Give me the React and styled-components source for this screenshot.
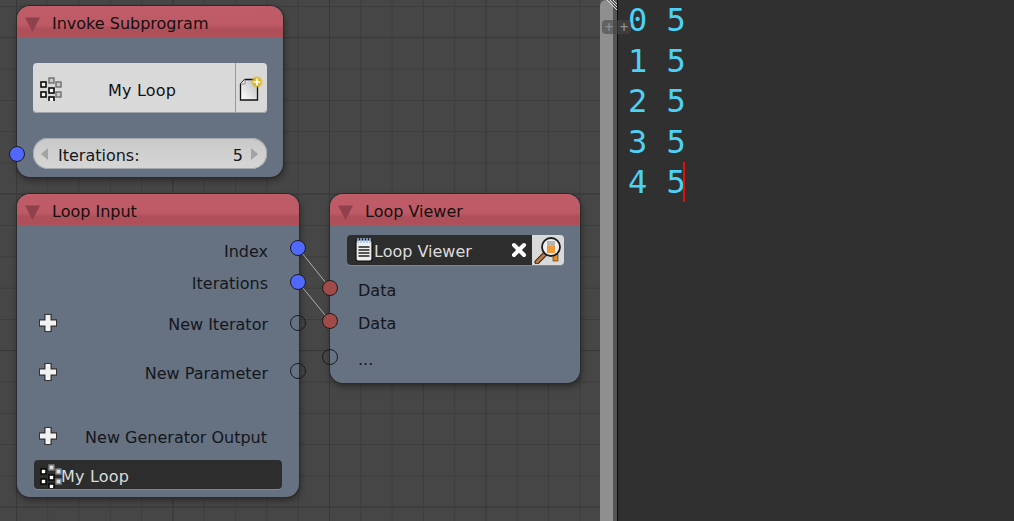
import styled, { createGlobalStyle } from 'styled-components';

const GlobalStyle = createGlobalStyle`
  html, body {
    margin: 0;
    padding: 0;
    background: #303030;
  }
  #root {
    width: 1014px;
    height: 521px;
    overflow: hidden;
  }
`;

const Screen = styled.div`
  display: flex;
  width: 1014px;
  height: 521px;
  font-family: 'DejaVu Sans', sans-serif;
`;

const NodeEditor = styled.div`
  position: relative;
  width: 600px;
  height: 521px;
  overflow: hidden;
  background-color: #464646;
  background-image:
    linear-gradient(90deg, #393939 1px, transparent 1px),
    linear-gradient(#393939 1px, transparent 1px),
    linear-gradient(90deg, #3d3d3d 1px, transparent 1px),
    linear-gradient(#3d3d3d 1px, transparent 1px);
  background-size: 156.5px 156.5px, 156.5px 156.5px, 31.3px 31.3px, 31.3px 31.3px;
  background-position: 16px 37px, 16px 37px, 16px 6px, 16px 6px;
`;

const Wires = styled.svg`
  position: absolute;
  inset: 0;
`;

const Node = styled.div`
  position: absolute;
  left: ${(p) => p.$x}px;
  top: ${(p) => p.$y}px;
  width: ${(p) => p.$w}px;
  height: ${(p) => p.$h}px;
  display: flex;
  flex-direction: column;
  background: #667181;
  border-radius: 13px;
  box-shadow: 0 0 0 1px #2b2b2b, 1px 3px 7px rgba(0, 0, 0, 0.45);
`;

const Header = styled.div`
  display: flex;
  align-items: center;
  flex: 0 0 31px;
  box-sizing: border-box;
  gap: 12px;
  padding: 4px 0 0 8px;
  background: linear-gradient(#c05c67 0, #bd5a65 60%, #ae4f5a 75%, #ae4f5a 100%);
  border-radius: 13px 13px 0 0;
  color: #14100f;
  font-size: 16px;
`;

const Collapse = styled.svg`
  flex: none;
  width: 15px;
  height: 15px;
  margin-top: 1px;
`;

const Body = styled.div`
  display: flex;
  flex-direction: column;
  flex: 1;
  padding-top: ${(p) => p.$top || 0}px;
`;

const FieldRow = styled.div`
  position: relative;
  display: flex;
  align-items: center;
  box-sizing: border-box;
  height: ${(p) => p.$h || 32}px;
  margin-top: ${(p) => p.$mt || 0}px;
  padding: 0 ${(p) => p.$pr ?? 0}px 0 ${(p) => p.$pl ?? 0}px;
`;

const Row = styled(FieldRow)`
  justify-content: ${(p) => (p.$left ? 'flex-start' : 'space-between')};
  color: #14171c;
  font-size: 16px;
`;

const Spacer = styled.span`
  flex: 1;
`;

const Socket = styled.span`
  position: absolute;
  ${(p) => (p.$side === 'left' ? 'left: -8px;' : 'right: -7px;')}
  top: calc(50% - 8px + ${(p) => p.$dy || 0}px);
  width: 16px;
  height: 16px;
  box-sizing: border-box;
  border-radius: 50%;
  border: 1px solid #1c1c1c;
  background: ${(p) => p.$color || 'transparent'};
`;

const PickerButton = styled.div`
  display: flex;
  align-items: stretch;
  height: 50px;
  margin: 0 16px;
  background: #d9d9d9;
  border-radius: 4px;
  box-shadow: inset 0 -1px 0 #a0a3a8;
  font-size: 16px;
  letter-spacing: 0.2px;
  color: #111;
`;

const PickerMain = styled.div`
  position: relative;
  display: flex;
  align-items: center;
  justify-content: center;
  flex: 1;
  padding: 4px 0 0 16px;
`;

const PickerIcon = styled.svg`
  position: absolute;
  left: 7px;
  top: 12px;
  width: 24px;
  height: 26px;
`;

const PickerAdd = styled.div`
  display: flex;
  align-items: center;
  justify-content: center;
  width: 31px;
  border-left: 1px solid #9a9a9a;
`;

const NumberField = styled.div`
  display: flex;
  flex: 1;
  align-items: center;
  height: 31px;
  padding: 0 9px 0 8px;
  background: linear-gradient(#c9c9c9, #d6d6d6);
  border-radius: 15px;
  box-shadow: inset 0 0 0 1px #a6a9ad;
  color: #15171a;
  font-size: 16px;
`;

const Label = styled.span`
  flex: 1;
  margin-left: 9px;
  padding-top: 4px;
`;

const Value = styled.span`
  margin-right: 7px;
  padding-top: 4px;
`;

const DarkField = styled.div`
  display: flex;
  align-items: center;
  flex: 1;
  height: ${(p) => p.$h}px;
  min-width: 0;
  padding-left: ${(p) => p.$pl}px;
  background: #2d2d2d;
  border-radius: ${(p) => (p.$joined ? '4px 0 0 4px' : '4px')};
  box-shadow: 0 1px 0 #7d8591;
  color: #dcdcdc;
  font-size: 16px;
`;

const FieldText = styled.span`
  padding-top: 3px;
  margin-left: ${(p) => p.$ml || 0}px;
  letter-spacing: ${(p) => p.$ls || 0}px;
`;

const FieldIcon = styled.svg`
  flex: none;
`;

const ClearIcon = styled.svg`
  flex: none;
  margin-right: 5px;
`;

const SearchButton = styled.div`
  display: flex;
  align-items: center;
  justify-content: center;
  flex: none;
  width: 32px;
  height: 30px;
  background: #d9d9d9;
  border-radius: 0 4px 4px 0;
  box-shadow: 0 1px 0 #7d8591;
`;

const PlusMark = styled.svg`
  flex: none;
  margin-bottom: 3px;
`;

const NotepadMark = styled.svg`
  flex: none;
  margin-left: 7px;
`;

const Divider = styled.div`
  position: relative;
  display: flex;
  flex: none;
  width: 18px;
  background: #555;
  border-right: 1px solid #0c0c0c;
  box-sizing: border-box;
`;

const ScrollThumb = styled.div`
  width: 13px;
  height: 100%;
  background: #8f8f8f;
  border-radius: 6px 6px 0 0;
`;

const CornerHatch = styled.svg`
  position: absolute;
  top: 0;
  right: 0;
`;

const SplitHandle = styled.div`
  position: absolute;
  left: 2px;
  top: 20px;
  display: flex;
  justify-content: space-between;
  box-sizing: border-box;
  width: 29px;
  height: 14px;
  padding: 0 2px;
  background: rgba(70, 70, 70, 0.6);
  border-radius: 4px;
  color: #8c8c8c;
  font-size: 12px;
  font-weight: bold;
  line-height: 14px;
`;

const TextEditor = styled.div`
  flex: 1;
  padding: 0 0 0 10px;
  background: #303030;
  color: #4cd2f7;
  font-family: 'DejaVu Sans Mono', monospace;
  font-size: 32px;
  line-height: 40.5px;
`;

const Line = styled.div`
  white-space: pre;
`;

const Caret = styled.span`
  display: inline-block;
  width: 2px;
  height: 40px;
  margin-left: -3px;
  background: #e01010;
  vertical-align: top;
`;

const TriangleDown = () => (
  <Collapse viewBox="0 0 15 15">
    <path d="M0 0.5H15L7.5 15Z" fill="#8f414b" />
  </Collapse>
);

const GridIcon = ({ light }) => {
  const main = light ? '#f2f2f2' : '#fff';
  const edge = '#0a0a0a';
  const soft = light ? '#c8c8c8' : '#dcdcdc';
  const softEdge = light ? '#6e6e6e' : '#7f7f7f';
  return (
    <>
      {[[1, 7], [9, 13], [1, 17], [9, 22]].map(([x, y]) => (
        <rect key={`${x}${y}`} x={x} y={y} width="5" height="5" fill={main} stroke={edge} strokeWidth="1.6" />
      ))}
      {[[9, 3], [16, 7], [16, 17]].map(([x, y]) => (
        <rect key={`${x}${y}`} x={x} y={y} width="5" height="5" fill={soft} stroke={softEdge} strokeWidth="1.4" />
      ))}
    </>
  );
};

const NewFileIcon = () => (
  <svg width="26" height="26" viewBox="0 0 26 26">
    <defs>
      <linearGradient id="page" x1="0" y1="1" x2="1" y2="0">
        <stop offset="0" stopColor="#fff" />
        <stop offset="1" stopColor="#bdbdbd" />
      </linearGradient>
      <radialGradient id="glow">
        <stop offset="0.55" stopColor="#dcb81e" />
        <stop offset="1" stopColor="#dcb81e" stopOpacity="0" />
      </radialGradient>
    </defs>
    <path d="M6 4.5H18.5V25H1.5V9Z" fill="url(#page)" stroke="#111" strokeWidth="1.3" />
    <path d="M6 4.5V9H1.5" fill="#f2f2f2" stroke="#777" strokeWidth="0.8" />
    <circle cx="18" cy="7" r="6.5" fill="url(#glow)" />
    <path d="M18 3.5V10.5M14.5 7H21.5" stroke="#fff" strokeWidth="1.6" />
  </svg>
);

const PlusIcon = () => (
  <PlusMark width="20" height="20" viewBox="0 0 20 20">
    <path d="M10 1V19M1 10H19" stroke="#333" strokeWidth="7.5" />
    <path d="M10 2V18M2 10H18" stroke="#f2f2f2" strokeWidth="5" />
  </PlusMark>
);

const Arrow = ({ dir }) => (
  <svg width="8" height="12" viewBox="0 0 8 12">
    <path d={dir === 'left' ? 'M7 0V12L0 6Z' : 'M1 0V12L8 6Z'} fill="#a3a3a3" />
  </svg>
);

const NotepadIcon = () => (
  <NotepadMark width="20" height="26" viewBox="0 0 20 26">
    <rect x="2" y="3" width="16" height="21" rx="2" fill="#ededed" stroke="#111" strokeWidth="1.2" />
    <path d="M4 1V6M7 1V6M10 1V6M13 1V6M16 1V6" stroke="#9dc0e8" strokeWidth="1.4" />
    <path d="M4.5 10H15.5M4.5 13H15.5M4.5 16H15.5M4.5 19H15.5" stroke="#222" strokeWidth="1.6" />
  </NotepadMark>
);

const MagnifierIcon = () => (
  <svg width="28" height="28" viewBox="0 0 28 28">
    <rect x="19" y="18" width="5" height="7" fill="#ea8a1a" stroke="#333" strokeWidth="0.6" />
    <path d="M3 26L11 18" stroke="#3a2414" strokeWidth="5" strokeLinecap="round" />
    <path d="M3 26L11 18" stroke="#b8784a" strokeWidth="3" strokeLinecap="round" />
    <circle cx="17" cy="11" r="9" fill="#f0f0f0" stroke="#1c1c1c" strokeWidth="1.8" />
    <rect x="13" y="10" width="8" height="7" fill="#ef9a3a" />
    <rect x="13" y="5" width="8" height="5" fill="#b5b5b5" />
  </svg>
);

const App = () => (
  <Screen>
    <GlobalStyle />
    <NodeEditor>
      <Wires width="600" height="521">
        <path d="M298 248L330 288M298 282L330 321" stroke="#aeaeae" strokeWidth="1" />
      </Wires>

      <Node $x={17} $y={6} $w={266} $h={171}>
        <Header>
          <TriangleDown />
          Invoke Subprogram
        </Header>
        <Body $top={26}>
          <PickerButton>
            <PickerMain>
              <PickerIcon viewBox="0 0 24 26">
                <GridIcon light />
              </PickerIcon>
              My Loop
            </PickerMain>
            <PickerAdd>
              <NewFileIcon />
            </PickerAdd>
          </PickerButton>
          <FieldRow $h={31} $mt={25} $pl={16} $pr={16}>
            <Socket $side="left" $color="#5068ff" />
            <NumberField>
              <Arrow dir="left" />
              <Label>Iterations:</Label>
              <Value>5</Value>
              <Arrow dir="right" />
            </NumberField>
          </FieldRow>
        </Body>
      </Node>

      <Node $x={17} $y={194} $w={282} $h={303}>
        <Header>
          <TriangleDown />
          Loop Input
        </Header>
        <Body $top={10}>
          <Row $pl={22} $pr={31}>
            <Spacer />
            Index
            <Socket $dy={-3} $color="#5068ff" />
          </Row>
          <Row $pl={22} $pr={31}>
            <Spacer />
            Iterations
            <Socket $dy={-1} $color="#5068ff" />
          </Row>
          <Row $mt={9} $pl={21} $pr={31}>
            <PlusIcon />
            New Iterator
            <Socket $dy={-1} />
          </Row>
          <Row $mt={17} $pl={21} $pr={31}>
            <PlusIcon />
            New Parameter
            <Socket $dy={-2} />
          </Row>
          <Row $mt={32} $pl={21} $pr={32}>
            <PlusIcon />
            New Generator Output
          </Row>
          <FieldRow $h={29} $mt={7} $pl={17} $pr={17}>
            <DarkField $h={29} $pl={6}>
              <FieldIcon width="24" height="26" viewBox="0 0 24 26">
                <GridIcon />
              </FieldIcon>
              <FieldText $ml={-3} $ls={0.2}>My Loop</FieldText>
            </DarkField>
          </FieldRow>
        </Body>
      </Node>

      <Node $x={330} $y={194} $w={250} $h={189}>
        <Header>
          <TriangleDown />
          Loop Viewer
        </Header>
        <Body $top={10}>
          <FieldRow $h={30} $pl={17} $pr={16}>
            <DarkField $h={30} $pl={0} $joined>
              <NotepadIcon />
              <FieldText>Loop Viewer</FieldText>
              <Spacer />
              <ClearIcon width="16" height="16" viewBox="0 0 16 16">
                <path d="M3 3L13 13M13 3L3 13" stroke="#fff" strokeWidth="4" strokeLinecap="round" />
              </ClearIcon>
            </DarkField>
            <SearchButton>
              <MagnifierIcon />
            </SearchButton>
          </FieldRow>
          <Row $left $pl={28} $mt={9}>
            <Socket $side="left" $dy={-2} $color="#a04a4a" />
            Data
          </Row>
          <Row $left $pl={28} $mt={1}>
            <Socket $side="left" $dy={-2} $color="#a04a4a" />
            Data
          </Row>
          <Row $left $pl={28} $mt={4}>
            <Socket $side="left" $dy={-2} />
            ...
          </Row>
        </Body>
      </Node>
    </NodeEditor>

    <Divider>
      <ScrollThumb />
      <CornerHatch width="11" height="10" viewBox="0 0 11 10">
        <path d="M1 0L11 10M4 0L11 7M7 0L11 4" stroke="#e0e0e0" strokeWidth="1" />
      </CornerHatch>
      <SplitHandle>
        <span>+</span>
        <span>+</span>
      </SplitHandle>
    </Divider>

    <TextEditor>
      <Line>0 5</Line>
      <Line>1 5</Line>
      <Line>2 5</Line>
      <Line>3 5</Line>
      <Line>4 5<Caret /></Line>
    </TextEditor>
  </Screen>
);

export default App;
